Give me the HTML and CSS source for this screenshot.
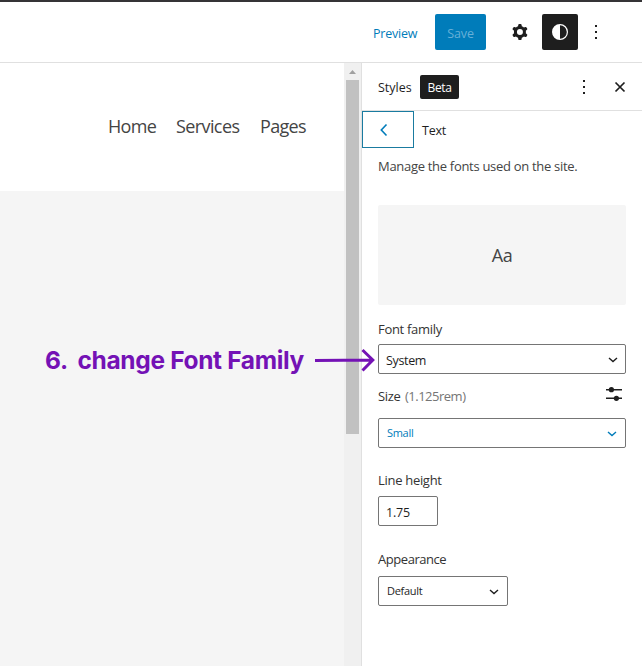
FILE: index.html
```html
<!DOCTYPE html>
<html lang="en">
<head>
<meta charset="utf-8">
<title>Site editor</title>
<link rel="stylesheet" href="styles.css">
</head>
<body>
<div class="editor">
  <header class="topbar">
    <a class="preview"><span>Preview</span></a>
    <button class="save">Save</button>
    <svg class="icon gear" viewBox="0 0 24 24"><path fill-rule="evenodd" d="M10.289 4.836A1 1 0 0111.275 4h1.306a1 1 0 01.987.836l.244 1.466c.787.26 1.503.679 2.108 1.218l1.393-.522a1 1 0 011.216.437l.653 1.13a1 1 0 01-.23 1.273l-1.148.944a6.025 6.025 0 010 2.435l1.149.946a1 1 0 01.23 1.272l-.653 1.13a1 1 0 01-1.216.437l-1.394-.522c-.605.54-1.32.958-2.108 1.218l-.244 1.466a1 1 0 01-.987.836h-1.306a1 1 0 01-.986-.836l-.244-1.466a5.995 5.995 0 01-2.108-1.218l-1.394.522a1 1 0 01-1.217-.436l-.653-1.131a1 1 0 01.23-1.272l1.149-.946a6.026 6.026 0 010-2.435l-1.148-.944a1 1 0 01-.23-1.272l.653-1.131a1 1 0 011.217-.437l1.393.522a5.994 5.994 0 012.108-1.218l.244-1.466zM14.929 12a3 3 0 11-6 0 3 3 0 016 0z"/></svg>
    <button class="styles-toggle"><svg class="icon" viewBox="0 0 24 24"><path fill-rule="evenodd" d="M12 4a8 8 0 1 0 0 16 8 8 0 0 0 0-16zm0 1.2a6.8 6.8 0 0 1 0 13.6z"/></svg></button>
    <svg class="icon more" viewBox="0 0 24 24"><path d="M11 5h2v2h-2zM11 11h2v2h-2zM11 17h2v2h-2z"/></svg>
  </header>
  <div class="body">
    <main class="canvas">
      <nav class="site-nav"><a class="home">Home</a><a class="services">Services</a><a class="pages">Pages</a></nav>
      <section class="site-content"></section>
    </main>
    <div class="scrollbar">
      <svg class="scroll-up" viewBox="0 0 17 17"><path d="M5 11l3.500-4 3.500 4z"/></svg>
      <div class="thumb"></div>
    </div>
    <aside class="sidebar">
      <div class="panel-head">
        <strong class="title">Styles</strong>
        <span class="beta">Beta</span>
        <svg class="icon panel-more" viewBox="0 0 24 24"><path d="M11 5h2v2h-2zM11 11h2v2h-2zM11 17h2v2h-2z"/></svg>
        <svg class="icon" viewBox="0 0 24 24"><path d="M7.500 7.500l9 9M16.500 7.500l-9 9" fill="none" stroke="currentColor" stroke-width="1.700"/></svg>
      </div>
      <div class="screen-head">
        <button class="back"><svg class="icon" viewBox="0 0 24 24"><path d="M13.500 6.500L8.300 12l5.200 5.500" fill="none" stroke="currentColor" stroke-width="1.600"/></svg></button>
        <span class="screen-title">Text</span>
      </div>
      <p class="description">Manage the fonts used on the site.</p>
      <div class="sample"><span>Aa</span></div>
      <label class="label family-label">Font family</label>
      <div class="control family"><span>System</span><svg class="chevron" viewBox="0 0 10 6"><path d="M1 1l4 3.500L9 1"/></svg></div>
      <div class="size-row">
        <span class="label size-label">Size</span><span class="hint">(1.125rem)</span>
        <svg class="sliders" viewBox="0 0 16 16"><path d="M0 3.700h16M0 12.300h16" stroke="currentColor" stroke-width="1.500"/><circle cx="5.400" cy="3.700" r="2.600"/><circle cx="10.400" cy="12.300" r="2.600"/></svg>
      </div>
      <div class="control size"><span>Small</span><svg class="chevron" viewBox="0 0 10 6"><path d="M1 1l4 3.500L9 1"/></svg></div>
      <label class="label line-label">Line height</label>
      <div class="control line"><span>1.75</span></div>
      <label class="label appearance-label">Appearance</label>
      <div class="control appearance"><span>Default</span><svg class="chevron" viewBox="0 0 10 6"><path d="M1 1l4 3.500L9 1"/></svg></div>
    </aside>
  </div>
  <div class="annotation">
    <span class="step">6.</span><span class="note">change Font Family</span>
    <svg class="arrow" viewBox="0 0 62 26"><path d="M1 13.500L58.500 13M48.500 3L58.800 13L48.500 23.500" /></svg>
  </div>
</div>
</body>
</html>
```

FILE: styles.css
```css
* { box-sizing: border-box; }
body {
  margin: 0;
  font-family: "Open Sans", "Noto Sans", sans-serif;
  font-size: 13px;
  color: #1e1e1e;
  background: #fff;
}
button { padding: 0; border: 0; font: inherit; }
span, a, strong, label { white-space: nowrap; }
.editor {
  position: relative;
  display: flex;
  flex-direction: column;
  width: 642px;
  height: 666px;
  overflow: hidden;
}
.icon { display: block; flex: none; width: 24px; height: 24px; fill: currentColor; }

.topbar {
  display: flex;
  align-items: center;
  justify-content: flex-end;
  flex: none;
  height: 63px;
  padding-right: 34px;
  border-top: 2px solid #353436;
  border-bottom: 1px solid #e0e0e0;
}
.preview { width: 44px; margin: 2px 18px 0 0; color: #007cba; font-size: 12.5px; letter-spacing: -.2px; }
.save {
  width: 51px;
  height: 36px;
  margin-right: 22px;
  padding-top: 2px;
  border-radius: 2px;
  background: #007cba;
  color: #66b0d8;
  font-size: 12.5px;
  letter-spacing: -.1px;
}
.gear { margin-right: 10px; }
.styles-toggle {
  display: grid;
  place-items: center;
  width: 36px;
  height: 36px;
  margin-right: 6px;
  border-radius: 2px;
  background: #1e1e1e;
  color: #fff;
}

.body { display: flex; flex: 1; min-height: 0; }
.canvas { display: flex; flex-direction: column; width: 344px; }
.site-nav {
  display: flex;
  flex: none;
  height: 128px;
  padding: 50px 0 0 108px;
  color: #444;
  font-size: 18px;
  line-height: 26px;
}
.home { width: 68px; letter-spacing: -.7px; }
.services { width: 84px; letter-spacing: -.6px; }
.pages { letter-spacing: -.7px; }
.site-content { flex: 1; background: #f5f5f5; }

.scrollbar { width: 17px; padding-right: 2px; background: #f0f0f0; }
.scroll-up { display: block; width: 17px; height: 17px; fill: #a0a0a0; }
.thumb { width: 13px; height: 354px; margin-left: 2px; background: #c1c1c1; }

.sidebar { width: 281px; border-left: 1px solid #e0e0e0; }
.panel-head {
  display: flex;
  align-items: center;
  height: 48px;
  padding: 0 10px 0 16px;
  border-bottom: 1px solid #e0e0e0;
}
.title { width: 42px; padding-top: 1px; font-weight: 500; font-size: 12.5px; }
.beta {
  display: grid;
  place-items: center;
  width: 39px;
  height: 24px;
  padding-top: 1px;
  border-radius: 2px;
  background: #1e1e1e;
  color: #fff;
  font-size: 12px;
  font-weight: 500;
  letter-spacing: -.4px;
}
.panel-more { margin: 0 12px 0 auto; }
.screen-head { display: flex; align-items: center; height: 37px; }
.back {
  display: flex;
  align-items: center;
  width: 52px;
  height: 37px;
  padding-left: 10px;
  border: 1px solid #1a7ba0;
  background: #fff;
  color: #007cba;
}
.screen-title { margin: 2px 0 0 8px; font-size: 12.5px; font-weight: 500; letter-spacing: -.2px; }
.description { margin: 9px 0 29px 16px; color: #444; font-size: 13px; line-height: 19px; letter-spacing: -.3px; white-space: nowrap; }
.sample {
  display: grid;
  place-items: center;
  width: 248px;
  height: 100px;
  margin-left: 16px;
  border-radius: 2px;
  background: #f5f5f5;
  color: #444;
  font-size: 18px;
  letter-spacing: -.5px;
}
.label { display: block; color: #333; font-size: 13px; line-height: 18px; letter-spacing: -.3px; }
.family-label { margin: 15px 0 6px 16px; }
.control {
  display: flex;
  align-items: center;
  justify-content: space-between;
  height: 30px;
  margin-left: 16px;
  padding: 2px 8px 0 7px;
  border: 1px solid #757575;
  border-radius: 2px;
  font-size: 12.5px;
  letter-spacing: -.3px;
}
.chevron { width: 10px; height: 6px; margin-top: -1px; fill: none; stroke: currentColor; stroke-width: 1.4; }
.family { padding-right: 7px; letter-spacing: -.35px; }
.family, .size { width: 248px; }
.size-row { display: flex; align-items: center; height: 44px; padding: 0 20px 0 16px; }
.size-label { width: 27px; }
.hint { color: #757575; font-size: 13px; line-height: 18px; letter-spacing: -.5px; }
.sliders { width: 16px; height: 16px; margin: -4px 0 0 auto; fill: currentColor; }
.size, .appearance { padding: 0 8px; font-size: 11px; }
.size span, .appearance span { margin-top: -2px; }
.size { color: #007cba; }
.line { width: 60px; letter-spacing: -.2px; }
.size .chevron, .appearance .chevron { margin-top: 1px; }
.line-label { margin: 23px 0 7px 16px; }
.appearance-label { margin: 24px 0 8px 16px; letter-spacing: -.45px; }
.appearance { width: 130px; }

.annotation {
  position: absolute;
  left: 45px;
  top: 345px;
  display: flex;
  align-items: center;
  height: 30px;
  color: #7412b5;
  font: 700 24.500px/30px Inter, sans-serif;
}
.step { width: 32.500px; letter-spacing: -.3px; }
.note { width: 236px; letter-spacing: -.34px; }
.arrow { width: 62px; height: 26px; fill: none; stroke: currentColor; stroke-width: 3; }
```
